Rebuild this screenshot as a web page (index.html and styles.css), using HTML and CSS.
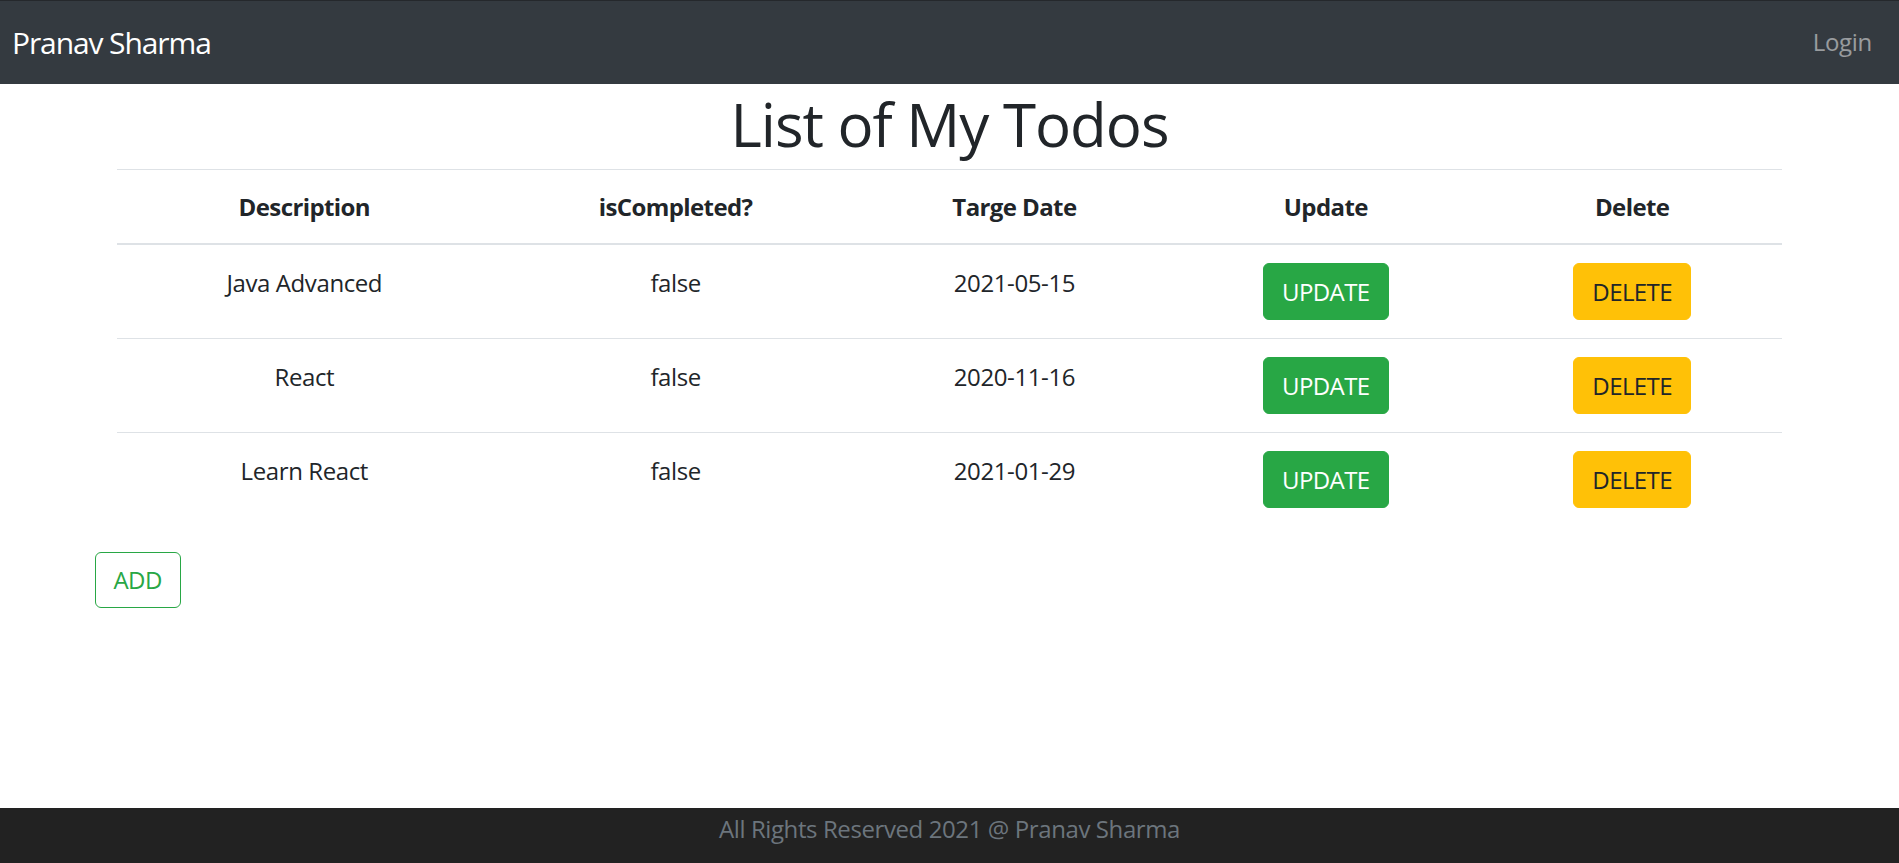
FILE: index.html
```html
<!DOCTYPE html>
<html lang="en">
<head>
<meta charset="utf-8">
<title>Todos</title>
<link rel="stylesheet" href="styles.css">
</head>
<body>
<header class="navbar">
  <a class="brand" href="#">Pranav Sharma</a>
  <nav class="nav">
    <a class="nav-link" href="#">Login</a>
  </nav>
</header>
<main class="container">
  <h1 class="title">List of My Todos</h1>
  <table class="table">
    <colgroup>
      <col class="c1"><col class="c2"><col class="c3"><col class="c4"><col class="c5">
    </colgroup>
    <thead>
      <tr>
        <th>Description</th>
        <th>isCompleted?</th>
        <th>Targe Date</th>
        <th>Update</th>
        <th>Delete</th>
      </tr>
    </thead>
    <tbody>
      <tr>
        <td class="cell-text">Java Advanced</td>
        <td class="cell-text">false</td>
        <td class="cell-text">2021-05-15</td>
        <td><button class="btn btn-success">UPDATE</button></td>
        <td><button class="btn btn-warning">DELETE</button></td>
      </tr>
      <tr>
        <td class="cell-text">React</td>
        <td class="cell-text">false</td>
        <td class="cell-text">2020-11-16</td>
        <td><button class="btn btn-success">UPDATE</button></td>
        <td><button class="btn btn-warning">DELETE</button></td>
      </tr>
      <tr>
        <td class="cell-text">Learn React</td>
        <td class="cell-text">false</td>
        <td class="cell-text">2021-01-29</td>
        <td><button class="btn btn-success">UPDATE</button></td>
        <td><button class="btn btn-warning">DELETE</button></td>
      </tr>
    </tbody>
  </table>
  <div class="row">
    <button class="btn btn-outline-success">ADD</button>
  </div>
</main>
<footer class="footer">
  <span class="text-muted">All Rights Reserved 2021 @ Pranav Sharma</span>
</footer>
</body>
</html>
```
FILE: styles.css
```css
* { box-sizing: border-box; }

html, body { height: 100%; }

body {
  margin: 0;
  font-family: "Open Sans", "Noto Sans", sans-serif;
  font-size: 24px;
  line-height: 1.5;
  color: #212529;
  background: #fff;
  display: flex;
  flex-direction: column;
  min-height: 100vh;
  overflow: hidden;
}

.navbar {
  background: #343a40;
  border-top: 1px solid #25282c;
  display: flex;
  justify-content: space-between;
  align-items: center;
  padding: 11px 15px 12px 12px;
  height: 84px;
  flex: none;
}

.brand {
  color: #fff;
  text-decoration: none;
  font-size: 30px;
  line-height: 45px;
  padding: 7.5px 0;
  letter-spacing: -1.1px;
}

.nav { display: flex; }

.nav-link {
  color: rgba(255, 255, 255, 0.5);
  text-decoration: none;
  padding: 12px;
  line-height: 36px;
  letter-spacing: -0.3px;
}

.container {
  width: 100%;
  max-width: 1710px;
  margin: 0 auto;
  padding: 0 22.5px;
  flex: 1 0 auto;
}

.title {
  margin: 0 0 9px;
  padding-top: 4px;
  text-align: center;
  font-size: 60px;
  font-weight: 500;
  line-height: 72px;
  letter-spacing: -1px;
}

.table {
  width: 100%;
  border-collapse: collapse;
  table-layout: fixed;
  margin-bottom: 26px;
  text-align: center;
  letter-spacing: -0.4px;
}

.c1 { width: 22.5%; }
.c2 { width: 22.1%; }
.c3 { width: 18.6%; }
.c4 { width: 18.8%; }
.c5 { width: 18%; }

.table th,
.table td {
  padding: 18px;
  border-top: 1px solid #dee2e6;
  vertical-align: top;
}

.table td.cell-text {
  padding-top: 20px;
  padding-bottom: 16px;
}

.table thead th {
  vertical-align: bottom;
  padding: 19px 18px 18px;
  border-bottom: 2px solid #dee2e6;
  font-weight: 700;
  letter-spacing: -0.6px;
}

.btn {
  display: inline-block;
  font-family: inherit;
  font-size: 24px;
  line-height: 36px;
  padding: 9.5px 18px;
  border: 1px solid transparent;
  border-radius: 6px;
  cursor: pointer;
  letter-spacing: -0.6px;
  vertical-align: middle;
}

.btn-success {
  background: #28a745;
  border-color: #28a745;
  color: #fff;
}

.btn-warning {
  background: #ffc107;
  border-color: #ffc107;
  color: #212529;
}

.btn-outline-success {
  background: transparent;
  border-color: #28a745;
  color: #28a745;
  padding-top: 9px;
  padding-bottom: 9px;
}

.row {
  display: flex;
  margin: 0 -22.5px;
}

.footer {
  flex: none;
  height: 55px;
  background: #222222;
  text-align: center;
  padding-top: 3px;
  line-height: 36px;
}

.text-muted {
  color: #6c757d;
  letter-spacing: -0.4px;
}
```
